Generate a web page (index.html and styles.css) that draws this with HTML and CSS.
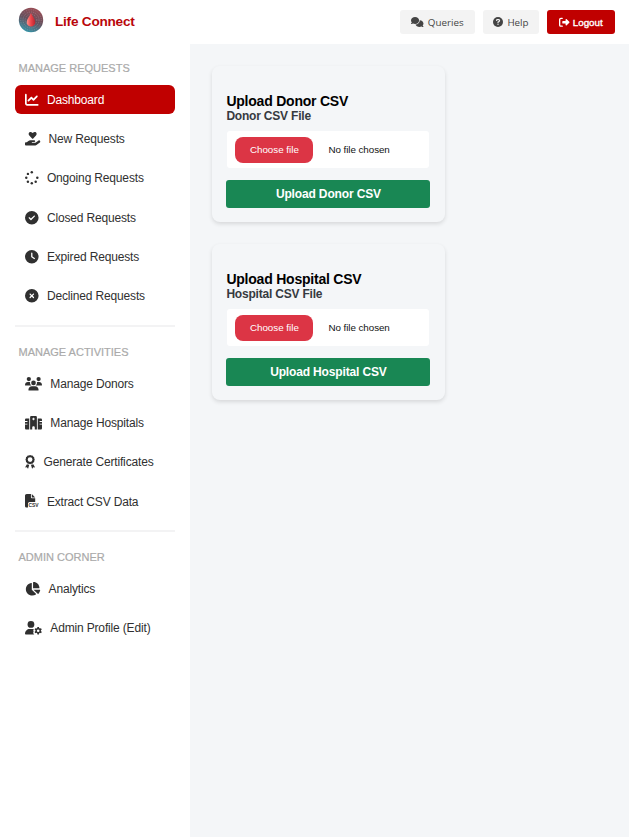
FILE: index.html
```html
<!DOCTYPE html>
<html lang="en">
<head>
<meta charset="utf-8">
<title>Life Connect</title>
<link rel="stylesheet" href="styles.css">
</head>
<body>
<header class="topbar">
  <div class="brand">
    <svg class="logo" viewBox="0 0 26 26">
      <defs>
        <linearGradient id="disc" x1=".7" y1="0" x2=".3" y2="1"><stop offset="0" stop-color="#9c4c54"/><stop offset=".5" stop-color="#65505d"/><stop offset="1" stop-color="#3396aa"/></linearGradient>
        <linearGradient id="drop" x1="0" x2="1"><stop offset="0" stop-color="#ff918b"/><stop offset=".5" stop-color="#ec4449"/><stop offset="1" stop-color="#b9232e"/></linearGradient>
      </defs>
      <circle cx="13" cy="13" r="12.2" fill="url(#disc)"/>
      <g fill="none" stroke="#c6b5bd" stroke-opacity=".4" stroke-width=".8"><circle cx="13" cy="13" r="10.3" stroke-dasharray="1 1.4"/><circle cx="13" cy="13" r="8" stroke-dasharray="1.2 1"/><circle cx="13" cy="13" r="5.8" stroke-dasharray="1 1.3"/></g>
      <path fill="url(#drop)" d="M13 6c1 3 4.300 6 4.300 9.200a4.300 4.300 0 0 1-8.600 0c0-3.200 3.300-6.200 4.300-9.200z"/>
    </svg>
    <span class="brand-name">Life Connect</span>
  </div>
  <nav class="actions">
    <a class="btn queries"><svg viewBox="0 0 640 512"><path d="M208 352c114.900 0 208-78.800 208-176S322.900 0 208 0S0 78.800 0 176c0 38.600 14.700 74.300 39.600 103.400c-3.500 9.400-8.700 17.700-14.200 24.700c-4.800 6.200-9.700 11-13.300 14.300l-5.600 4.700C1 327.200-1.400 334.400 .8 340.900S9.100 352 16 352c21.800 0 43.800-5.600 62.100-12.500c9.200-3.500 17.800-7.400 25.200-11.400C134.100 343.300 169.800 352 208 352zM448 176c0 112.300-99.100 196.900-216.500 207C255.800 457.400 336.400 512 432 512c38.200 0 73.900-8.700 104.700-23.900c7.500 4 16 7.900 25.200 11.400c18.300 6.900 40.300 12.500 62.100 12.500c6.900 0 13.100-4.500 15.200-11.100c2.100-6.600-.2-13.800-5.800-17.900l-5.600-4.700c-3.600-3.300-8.500-8.100-13.300-14.300c-5.500-7-10.700-15.400-14.200-24.700c24.900-29 39.600-64.700 39.600-103.400c0-92.800-84.900-168.900-192.600-175.500z"/></svg><span>Queries</span></a>
    <a class="btn help"><svg viewBox="0 0 512 512"><circle cx="256" cy="256" r="256"/><path class="cut-line" d="M180 175q8-42 42-42h68q48 0 48 50q0 28-28 44l-52 30v26"/><circle class="cut" cx="256" cy="365" r="38"/></svg><span>Help</span></a>
    <a class="btn logout"><svg viewBox="0 0 512 512"><path d="M377.900 105.900L500.700 228.700c7.200 7.200 11.300 17.100 11.300 27.300s-4.100 20.100-11.300 27.300L377.900 406.100c-6.400 6.400-15 9.900-24 9.900c-18.700 0-33.900-15.200-33.900-33.900V320H192c-17.700 0-32-14.300-32-32v-64c0-17.700 14.300-32 32-32h128v-62.100c0-18.700 15.200-33.900 33.900-33.900c9 0 17.600 3.600 24 9.900zM160 96H96c-17.700 0-32 14.300-32 32v256c0 17.700 14.300 32 32 32h64c17.700 0 32 14.300 32 32s-14.300 32-32 32H96c-53 0-96-43-96-96V128C0 75 43 32 96 32h64c17.700 0 32 14.300 32 32s-14.300 32-32 32z"/></svg><span>Logout</span></a>
  </nav>
</header>
<div class="layout">
  <aside class="sidebar">
    <section class="group">
      <h2>MANAGE REQUESTS</h2>
      <a class="item active"><svg viewBox="0 0 512 512"><path d="M64 64c0-17.700-14.300-32-32-32S0 46.300 0 64V400c0 44.200 35.800 80 80 80H480c17.700 0 32-14.300 32-32s-14.300-32-32-32H80c-8.800 0-16-7.200-16-16V64zm406.600 86.600c12.500-12.500 12.500-32.800 0-45.300s-32.800-12.500-45.300 0L320 210.700l-57.400-57.400c-12.500-12.500-32.800-12.500-45.300 0l-112 112c-12.500 12.500-12.500 32.800 0 45.300s32.800 12.500 45.300 0L240 221.300l57.400 57.400c12.500 12.500 32.800 12.500 45.300 0l128-128z"/></svg><span>Dashboard</span></a>
      <a class="item"><svg class="w576" viewBox="0 0 576 512"><path d="M275 250L162 134c-35-36-33-93 5-121 34-25 77-18 107 13l14 14 14-14c30-31 73-38 107-13 38 28 40 85 5 121L301 250q-13 13-26 0zM568 336c13 18 9 43-9 56L433 485c-23 17-51 27-80 27H32c-18 0-32-14-32-32v-64c0-18 14-32 32-32h37l45-36c28-23 64-36 100-36h138c18 0 32 14 32 32s-14 32-32 32h-80c-9 0-16 7-16 16s7 16 16 16h121l120-88c17-13 42-9 55 16z"/></svg><span>New Requests</span></a>
      <a class="item"><svg viewBox="0 0 512 512"><circle cx="256" cy="48" r="46"/><circle cx="256" cy="464" r="46"/><circle cx="48" cy="256" r="46"/><circle cx="464" cy="256" r="46"/><circle cx="109" cy="109" r="46"/><circle cx="109" cy="403" r="46"/><circle cx="403" cy="403" r="46"/></svg><span>Ongoing Requests</span></a>
      <a class="item"><svg viewBox="0 0 512 512"><path d="M256 512A256 256 0 1 0 256 0a256 256 0 1 0 0 512zM369 209L241 337c-9.400 9.400-24.600 9.400-33.900 0l-64-64c-9.400-9.400-9.400-24.600 0-33.900s24.600-9.400 33.900 0l47 47L335 175c9.400-9.400 24.600-9.400 33.900 0s9.400 24.600 0 33.900z"/></svg><span>Closed Requests</span></a>
      <a class="item"><svg viewBox="0 0 512 512"><path d="M256 0a256 256 0 1 1 0 512A256 256 0 1 1 256 0zM232 120V256c0 8 4 15.500 10.700 20l96 64c11 7.400 25.900 4.400 33.300-6.700s4.400-25.900-6.700-33.300L280 243.200V120c0-13.300-10.700-24-24-24s-24 10.700-24 24z"/></svg><span>Expired Requests</span></a>
      <a class="item"><svg viewBox="0 0 512 512"><path d="M256 512A256 256 0 1 0 256 0a256 256 0 1 0 0 512zM175 175c9.400-9.400 24.600-9.400 33.900 0l47 47 47-47c9.400-9.400 24.600-9.400 33.900 0s9.400 24.600 0 33.900l-47 47 47 47c9.400 9.400 9.400 24.600 0 33.900s-24.600 9.400-33.900 0l-47-47-47 47c-9.400 9.400-24.600 9.400-33.900 0s-9.400-24.600 0-33.900l47-47-47-47c-9.400-9.400-9.400-24.600 0-33.900z"/></svg><span>Declined Requests</span></a>
    </section>
    <section class="group">
      <h2>MANAGE ACTIVITIES</h2>
      <a class="item"><svg class="w640" viewBox="0 0 640 512"><circle cx="144" cy="80" r="80"/><circle cx="512" cy="80" r="80"/><circle cx="320" cy="224" r="88"/><path d="M0 299c0-59 48-107 107-107h42c16 0 31 4 45 10-13 64 11 92 46 118H21q-21 0-21-21zM405 320c35-29 54-70 43-119 13-6 28-9 43-9h42c59 0 107 48 107 107q0 21-21 21zM128 485c0-73 60-133 133-133h118c73 0 133 60 133 133q0 27-27 27H155q-27 0-27-27z"/></svg><span>Manage Donors</span></a>
      <a class="item"><svg class="w640" viewBox="0 0 640 512"><path fill-rule="evenodd" d="M192 48c0-27 21-48 48-48h160c27 0 48 21 48 48v464h-80v-80c0-27-21-48-48-48s-48 21-48 48v80h-80zM304 64v32h-32v32h32v32h32v-32h32V96h-32V64zM48 96h112v416H48c-27 0-48-21-48-48V320h80c9 0 16-7 16-16s-7-16-16-16H0v-64h80c9 0 16-7 16-16s-7-16-16-16H0v-48c0-27 21-48 48-48zm432 0h112c27 0 48 21 48 48v48h-80c-9 0-16 7-16 16s7 16 16 16h80v64h-80c-9 0-16 7-16 16s7 16 16 16h80v144c0 27-21 48-48 48H480z"/></svg><span>Manage Hospitals</span></a>
      <a class="item"><svg class="w384" viewBox="0 0 384 512"><path fill-rule="evenodd" d="M192 0l44 16 46 5 26 38 38 26 4 46 17 43-17 44-4 46-38 26-26 38-46 5-44 16-44-16-46-5-26-38-38-26-4-46-17-44 17-43 4-46 38-26 26-38 46-5zm0 84a90 90 0 1 0 0 180 90 90 0 1 0 0-180z"/><path d="M72 350l30 12 58 10-40 132q-8 12-18 0l-28-44-52 8q-16-2-9-19zM312 350l-30 12-58 10 40 132q8 12 18 0l28-44 52 8q16-2 9-19z"/></svg><span>Generate Certificates</span></a>
      <a class="item"><svg viewBox="0 0 512 512"><path d="M0 64C0 29 29 0 64 0h160v128c0 18 14 32 32 32h128v144H176c-35 0-64 29-64 64v144H64c-35 0-64-29-64-64zM256 0l128 128H256z"/><text class="csv" x="132" y="508" textLength="380" lengthAdjust="spacingAndGlyphs">CSV</text></svg><span>Extract CSV Data</span></a>
    </section>
    <section class="group">
      <h2>ADMIN CORNER</h2>
      <a class="item"><svg class="w576" viewBox="0 0 576 512"><path d="M304 240V16.600c0-9 7-16.600 16-16.600C443.700 0 544 100.300 544 224c0 9-7.600 16-16.600 16H304zM32 272C32 150.700 122.100 50.300 239 34.300c9.200-1.300 17 6.100 17 15.400V288L412.500 444.500c6.700 6.700 6.200 17.700-1.500 23.100C371.800 495.600 323.800 512 272 512C139.500 512 32 404.600 32 272zm526.400 16c9.300 0 16.600 7.800 15.400 17c-7.700 55.900-34.600 105.600-73.900 142.300c-6 5.600-15.400 5.200-21.200-.7L320 288H558.400z"/></svg><span>Analytics</span></a>
      <a class="item"><svg class="w640" viewBox="0 0 640 512"><circle cx="224" cy="128" r="128"/><path d="M0 482c0-98 80-178 178-178h92c23 0 45 4 65 12-14 20-30 40-24 60l17 20-17 25c-6 35 16 65 45 91H30q-30 0-30-30z"/><path fill-rule="evenodd" d="M467 225h58l9 43 27 15 42-13 29 50-33 29v31l33 30-29 50-42-14-27 16-9 43h-58l-9-43-27-16-42 14-29-50 33-30v-31l-33-29 29-50 42 13 27-15zm29 91a49 49 0 1 0 0 98 49 49 0 1 0 0-98z"/></svg><span>Admin Profile (Edit)</span></a>
    </section>
  </aside>
  <main class="content">
    <section class="card">
      <h1>Upload Donor CSV</h1>
      <div class="label">Donor CSV File</div>
      <div class="file"><button class="choose">Choose file</button><span>No file chosen</span></div>
      <button class="submit">Upload Donor CSV</button>
    </section>
    <section class="card">
      <h1>Upload Hospital CSV</h1>
      <div class="label">Hospital CSV File</div>
      <div class="file"><button class="choose">Choose file</button><span>No file chosen</span></div>
      <button class="submit">Upload Hospital CSV</button>
    </section>
  </main>
</div>
</body>
</html>
```
FILE: styles.css
```css
* { box-sizing: border-box; }
body { margin: 0; height: 837px; display: flex; flex-direction: column; overflow: hidden; font-family: "Liberation Sans", Arial, sans-serif; background: #fff; }
button { border: 0; font-family: inherit; }
svg { fill: currentColor; flex: none; overflow: visible; }

.topbar { height: 44px; flex: none; display: flex; justify-content: space-between; align-items: center; padding: 0 14px 0 18px; }
.brand { display: flex; align-items: center; gap: 11px; height: 44px; padding-bottom: 4px; }
.logo { width: 26px; height: 26px; }
.brand-name { font-size: 13.6px; letter-spacing: -.23px; font-weight: 700; color: #b9060a; padding-top: 3px; }
.actions { display: flex; gap: 8px; }
.btn { display: flex; align-items: center; justify-content: center; gap: 4px; height: 24px; border-radius: 3px; background: #f3f3f3; color: #444; font: 9.8px "Open Sans", sans-serif; }
.btn svg { height: 10px; }
.btn span { padding-top: 1px; }
.queries { width: 75px; }
.queries svg { width: 12.500px; }
.help { width: 56px; }
.help svg { width: 10px; }
.cut { fill: #f3f3f3; }
.cut-line { fill: none; stroke: #f3f3f3; stroke-width: 60; stroke-linecap: round; }
.logout { width: 68px; gap: 3px; background: #c00000; color: #fff; font: 9.8px "Liberation Sans", sans-serif; -webkit-text-stroke: .35px #fff; }
.logout svg { width: 10.500px; height: 10.500px; }

.layout { flex: 1; display: flex; min-height: 0; }
.sidebar { width: 190px; flex: none; padding: 0 15px 0 14.500px; }
.group { padding-top: 17px; }
.group + .group { border-top: 2px solid #f3f3f4; margin-top: 15px; padding-top: 18px; }
.group h2 { margin: 0 0 10.400px 4px; font-size: 11px; line-height: 14px; font-weight: 400; color: #aaa; -webkit-text-stroke: .2px #aaa; }
.item { display: flex; align-items: center; gap: 8px; height: 28.400px; margin-bottom: 10.900px; padding-left: 10.800px; border-radius: 6px; color: #303030; font-size: 12px; letter-spacing: -.16px; white-space: nowrap; }
.item:last-child { margin-bottom: 0; }
.group + .group h2 { margin-bottom: 10px; }
.item svg { width: 13.600px; height: 13.600px; }
.item span { padding-top: .6px; }
.item .w576 { width: 15.300px; }
.item .w640 { width: 17px; }
.item .w384 { width: 10.200px; }
.active { background: #c00000; color: #fff; }
.csv { font: 700 200px "Liberation Sans", sans-serif; letter-spacing: 0; }

.content { flex: 1; background: #f4f6f8; padding: 22px; }
.card { width: 233px; height: 156px; margin-bottom: 22px; padding: 27px 15px 15px 14.400px; border-radius: 8px; box-shadow: 0 2px 4px rgba(0, 0, 0, .12); }
.card h1 { margin: 0; font-size: 14px; letter-spacing: -.22px; line-height: 16px; color: #000; }
.label { font-size: 12px; letter-spacing: -.2px; line-height: 14px; font-weight: 700; color: #363a40; }
.file { height: 37px; margin: 8px 1px 12px; display: flex; align-items: center; gap: 15px; padding-left: 8px; border-radius: 3px; background: #fff; font-size: 9.800px; letter-spacing: -.05px; color: #111; }
.choose { width: 78px; height: 26px; padding: 0; border-radius: 8px; background: #dc3545; color: #fff; font-size: 9.800px; }
.submit { display: block; width: 204px; height: 28px; padding: 0; border-radius: 3px; background: #198754; color: #fff; font-size: 12px; letter-spacing: -.15px; font-weight: 700; }
```
